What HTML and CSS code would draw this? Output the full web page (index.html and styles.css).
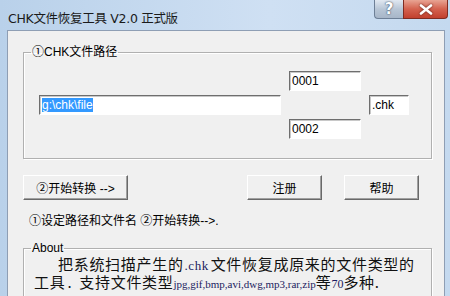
FILE: index.html
```html
<!DOCTYPE html>
<html lang="zh-CN">
<head>
    <meta charset="UTF-8">
    <title>CHK文件恢复工具 V2.0 正式版</title>
    <link rel="stylesheet" href="styles.css">
</head>
<body>
    <div class="window">
        <!-- barra de titulo -->
        <div class="titlebar">
            <span class="title">CHK文件恢复工具 V2.0 正式版</span>
            <div class="caption-btns">
                <span class="cap-help">?</span>
                <span class="cap-close">
                    <svg width="14" height="11" viewBox="0 0 14 11"><path d="M2 1.5 L12 9.5 M12 1.5 L2 9.5" stroke="#fff" stroke-width="2.6" stroke-linecap="round"/></svg>
                </span>
            </div>
        </div>

        <div class="client">
            <fieldset class="group">
                <legend>①CHK文件路径</legend>
                <div class="path-grid">
                    <input class="box path" type="text" value="g:\chk\file">
                    <input class="box num1" type="text" value="0001">
                    <input class="box ext" type="text" value=".chk">
                    <input class="box num2" type="text" value="0002">
                </div>
            </fieldset>

            <div class="buttons">
                <button class="btn start">②开始转换 --&gt;</button>
                <button class="btn reg">注册</button>
                <button class="btn help">帮助</button>
            </div>

            <p class="hint">①设定路径和文件名 ②开始转换--&gt;.</p>

            <fieldset class="group about">
                <legend>About</legend>
                <div class="about-text">
                    <div class="line1">把系统扫描产生的<span class="ext-name">.chk</span>文件恢复成原来的文件类型的</div>
                    <div>工具<span class="dot">.</span>支持文件类型<span class="en">jpg,gif,bmp,avi,dwg,mp3,rar,zip</span>等<span class="en num">70</span>多种.</div>
                </div>
            </fieldset>
        </div>
    </div>
    <script>
        var p = document.querySelector(".path");
        p.focus();
        p.setSelectionRange(0, p.value.length);
    </script>
</body>
</html>
```
FILE: styles.css
```css
body {
    margin: 0;
    width: 450px;
    height: 296px;
    overflow: hidden;
    font-family: "Liberation Sans", "Noto Sans CJK SC", sans-serif;
    font-size: 12px;
    color: #000;
}
.window {
    height: 296px;
    background: linear-gradient(to right, #b9d1ea, #cfe0f3 60%, #c4d9ef);
    padding: 0 5px 0 7px;
    box-sizing: border-box;
}
.titlebar {
    height: 30px;
    display: flex;
    justify-content: space-between;
    align-items: flex-start;
}
.title {
    margin-top: 8px;
    margin-left: 1px;
    font-family: "DejaVu Sans", "Noto Sans CJK SC", sans-serif;
    font-size: 12.5px;
    letter-spacing: -0.3px;
    color: #1a1a1a;
}
.caption-btns {
    display: flex;
    margin-right: -3px;
}
.cap-help, .cap-close {
    height: 18px;
    border: 1px solid #6d7f96;
    border-top: none;
    display: flex;
    align-items: center;
    justify-content: center;
}
.cap-help {
    width: 28px;
    border-right: none;
    border-radius: 0 0 0 4px;
    background: linear-gradient(#e1e8f1, #b8c6d6 50%, #a7b6c8);
    font: bold 15px "DejaVu Sans", sans-serif;
    color: #fff;
    text-shadow: 0 0 2px #44546a, 0 0 1px #44546a;
}
.cap-close {
    width: 43px;
    border-radius: 0 0 4px 0;
    border-color: #7f2c22;
    background: linear-gradient(#e8a493, #d4624f 50%, #c2402e);
}
.cap-close svg {
    filter: drop-shadow(0 0 1px #5a1a10);
}
.client {
    height: 266px;
    overflow: hidden;
    background: #f0f0f0;
    border: 1px solid #8e9eb4;
    border-bottom: none;
    box-sizing: border-box;
    padding-top: 14px;
}
.group {
    margin: 0 12px 0 15px;
    padding: 0;
    border: 1px solid #b0b0b0;
    box-shadow: inset 1px 1px 0 #fff, 1px 1px 0 #fff;
}
.group legend {
    margin-left: 7px;
    padding: 0 1px;
    font-family: "Liberation Sans", "Noto Sans CJK SC", sans-serif;
    font-size: 12px;
    line-height: 14px;
}
.path-grid {
    display: grid;
    grid-template-columns: 242px 72px 40px;
    grid-template-rows: 20px 20px 20px;
    column-gap: 8px;
    row-gap: 4px;
    margin: 12px 0 19px 15px;
}
.box {
    box-sizing: border-box;
    height: 20px;
    margin: 0;
    padding: 0 2px;
    background: #fff;
    border: 1px solid #fff;
    border-top-color: #6e6e6e;
    border-left-color: #6e6e6e;
    box-shadow: inset 1px 1px 0 #c8c8c8;
    font-family: "Liberation Sans", sans-serif;
    font-size: 12px;
    color: #000;
    outline: none;
}
.path { grid-column: 1; grid-row: 2; }
.num1 { grid-column: 2; grid-row: 1; }
.num2 { grid-column: 2; grid-row: 3; }
.ext { grid-column: 3; grid-row: 2; }
.path::selection {
    background: #3399ff;
    color: #fff;
}
.buttons {
    display: flex;
    margin: 16px 0 0 15px;
}
.btn {
    height: 25px;
    margin: 0;
    padding: 0;
    background: #f0f0f0;
    border: 1px solid;
    border-color: #fff #696969 #696969 #fff;
    box-shadow: inset -1px -1px 0 #a0a0a0;
    font-family: "Liberation Sans", "Noto Sans CJK SC", sans-serif;
    font-size: 12px;
    color: #000;
}
.start { width: 105px; }
.reg { width: 75px; margin-left: 119px; }
.help { width: 75px; margin-left: 22px; }
.hint {
    margin: 13px 0 0 21px;
    line-height: 16px;
}
.about {
    margin-top: 12px;
    height: 80px;
}
.about-text {
    margin: 1px 0 0 10px;
    font-family: "Noto Sans CJK SC", sans-serif;
    font-size: 15px;
    line-height: 16px;
    letter-spacing: 0.7px;
    color: #111;
    white-space: nowrap;
}
.line1 { margin-left: 24px; }
.ext-name {
    font-family: "Liberation Serif", serif;
    font-size: 13px;
    letter-spacing: 0.5px;
    color: #1c1c60;
    margin: 0 2px 0 1px;
}
.en {
    font-family: "Liberation Serif", serif;
    font-size: 11px;
    letter-spacing: 0;
    color: #1c1c60;
}
.num { font-size: 12px; }
.dot { margin: 0 7px 0 2px; }
```
